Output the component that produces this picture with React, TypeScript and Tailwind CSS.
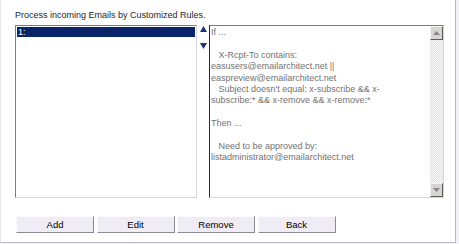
import React from "react";

const ruleLines = [
  "If ...",
  "",
  "   X-Rcpt-To contains:",
  "easusers@emailarchitect.net ||",
  "easpreview@emailarchitect.net",
  "   Subject doesn't equal: x-subscribe && x-",
  "subscribe:* && x-remove && x-remove:*",
  "",
  "Then ...",
  "",
  "   Need to be approved by:",
  "listadministrator@emailarchitect.net",
];

const buttons = ["Add", "Edit", "Remove", "Back"];

const ScrollButton = ({ down }: { down?: boolean }) => (
  <div className="flex h-[14px] w-[13px] items-center justify-center border border-t-[#f4f4f4] border-l-[#f4f4f4] border-r-[#5a5a5a] border-b-[#5a5a5a] bg-[#d8d5d0]">
    <svg width="7" height="4" viewBox="0 0 7 4">
      <path d={down ? "M0 0h7L3.5 4z" : "M3.5 0L7 4H0z"} fill="#8a8696" />
    </svg>
  </div>
);

export default function App() {
  return (
    <div className="h-[244px] w-[459px] bg-[#f3f1f8] font-['Liberation_Sans',Arial,sans-serif]">
      <div className="h-[243px] w-[456px] border-b border-r border-l border-b-[#b9b9bf] border-r-[#b9b9bf] border-l-[#e6e4ee] bg-white pl-[14px] pt-[10px]">
        <p className="text-[9px] leading-[11px] text-[#1e1e1e]">Process incoming Emails by Customized Rules.</p>

        <div className="mt-[4px] flex">
          {/* rule list */}
          <div className="h-[173px] w-[182px] border border-t-[#7c7c84] border-l-[#7c7c84] border-r-[#d6d4dc] border-b-[#d6d4dc] bg-white p-[1px]">
            <div className="h-[10px] bg-[#0a246a] pl-[1px] text-[9px] leading-[10px] text-white">1:</div>
          </div>

          {/* move up / down */}
          <div className="flex w-[12px] flex-col items-center pt-[1px]">
            <svg width="7" height="6" viewBox="0 0 7 6">
              <path d="M3.5 0L7 6H0z" fill="#1d3470" />
            </svg>
            <svg className="mt-[11px]" width="7" height="6" viewBox="0 0 7 6">
              <path d="M0 0h7L3.5 6z" fill="#1d3470" />
            </svg>
          </div>

          {/* rule details */}
          <div className="flex h-[173px] w-[235px] border border-t-[#7a7a82] border-l-[#2a2a3a] border-r-[#d6d4dc] border-b-[#d6d4dc] bg-white">
            <div className="flex-1 pl-[1px] pt-[1px]">
              {ruleLines.map((line, i) => (
                <div key={i} className="h-[11.4px] whitespace-pre text-[9px] leading-[11.4px] text-[#727272]">
                  {line}
                </div>
              ))}
            </div>
            <div className="flex w-[13px] flex-col justify-between bg-[repeating-conic-gradient(#dcd9e2_0_25%,#ffffff_0_50%)] bg-[length:2px_2px]">
              <ScrollButton />
              <ScrollButton down />
            </div>
          </div>
        </div>

        <div className="mt-[18px] flex gap-[2.5px] pl-[1px]">
          {buttons.map((label) => (
            <button
              key={label}
              className="h-[17px] w-[78px] border border-t-[#fbfbfd] border-l-[#fbfbfd] border-r-[#8a8a92] border-b-[#8a8a92] bg-[#efecf5] text-center text-[9.5px] leading-[15px] text-black"
            >
              {label}
            </button>
          ))}
        </div>
      </div>
    </div>
  );
}
